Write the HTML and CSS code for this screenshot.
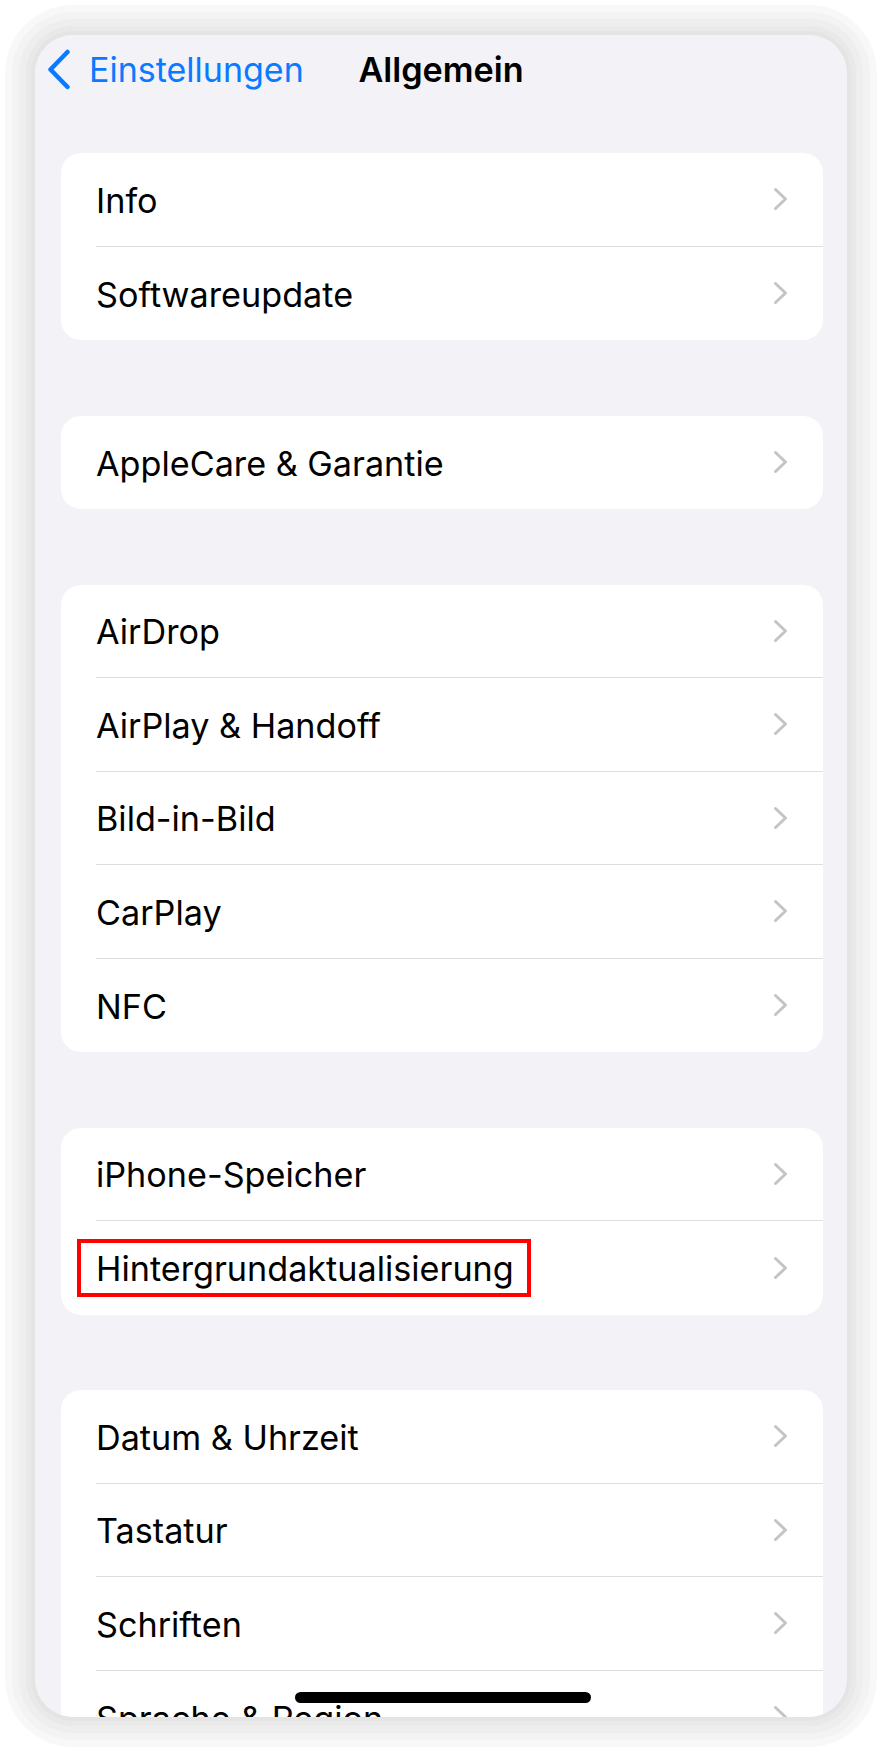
FILE: index.html
```html
<html>
<head>
<title>Allgemein</title>
<link rel="stylesheet" href="styles.css">
</head>
<body>
<div class="phone">
<div class="screen">

<!-- navigation -->
<header class="nav">
  <a class="back" href="#">
    <svg class="back-icon" width="24" height="41" viewBox="0 0 24 41"><polyline points="20.5,3 3.5,20.5 20.5,38" /></svg>
    <span>Einstellungen</span>
  </a>
  <h1 class="title">Allgemein</h1>
  <div></div>
</header>

<main class="groups">
  <ul class="group">
    <li class="row"><div class="row-body"><span class="label">Info</span><svg class="chev" width="15" height="24" viewBox="0 0 15 24"><polyline points="2.5,2.5 12.5,12 2.5,21.5" /></svg></div></li>
    <li class="row"><div class="row-body"><span class="label">Softwareupdate</span><svg class="chev" width="15" height="24" viewBox="0 0 15 24"><polyline points="2.5,2.5 12.5,12 2.5,21.5" /></svg></div></li>
  </ul>

  <ul class="group">
    <li class="row"><div class="row-body"><span class="label">AppleCare &amp; Garantie</span><svg class="chev" width="15" height="24" viewBox="0 0 15 24"><polyline points="2.5,2.5 12.5,12 2.5,21.5" /></svg></div></li>
  </ul>

  <ul class="group">
    <li class="row"><div class="row-body"><span class="label">AirDrop</span><svg class="chev" width="15" height="24" viewBox="0 0 15 24"><polyline points="2.5,2.5 12.5,12 2.5,21.5" /></svg></div></li>
    <li class="row"><div class="row-body"><span class="label">AirPlay &amp; Handoff</span><svg class="chev" width="15" height="24" viewBox="0 0 15 24"><polyline points="2.5,2.5 12.5,12 2.5,21.5" /></svg></div></li>
    <li class="row"><div class="row-body"><span class="label">Bild-in-Bild</span><svg class="chev" width="15" height="24" viewBox="0 0 15 24"><polyline points="2.5,2.5 12.5,12 2.5,21.5" /></svg></div></li>
    <li class="row"><div class="row-body"><span class="label">CarPlay</span><svg class="chev" width="15" height="24" viewBox="0 0 15 24"><polyline points="2.5,2.5 12.5,12 2.5,21.5" /></svg></div></li>
    <li class="row"><div class="row-body"><span class="label">NFC</span><svg class="chev" width="15" height="24" viewBox="0 0 15 24"><polyline points="2.5,2.5 12.5,12 2.5,21.5" /></svg></div></li>
  </ul>

  <ul class="group">
    <li class="row"><div class="row-body"><span class="label">iPhone-Speicher</span><svg class="chev" width="15" height="24" viewBox="0 0 15 24"><polyline points="2.5,2.5 12.5,12 2.5,21.5" /></svg></div></li>
    <li class="row"><div class="row-body"><span class="label marked">Hintergrundaktualisierung</span><svg class="chev" width="15" height="24" viewBox="0 0 15 24"><polyline points="2.5,2.5 12.5,12 2.5,21.5" /></svg></div></li>
  </ul>

  <ul class="group">
    <li class="row"><div class="row-body"><span class="label">Datum &amp; Uhrzeit</span><svg class="chev" width="15" height="24" viewBox="0 0 15 24"><polyline points="2.5,2.5 12.5,12 2.5,21.5" /></svg></div></li>
    <li class="row"><div class="row-body"><span class="label">Tastatur</span><svg class="chev" width="15" height="24" viewBox="0 0 15 24"><polyline points="2.5,2.5 12.5,12 2.5,21.5" /></svg></div></li>
    <li class="row"><div class="row-body"><span class="label">Schriften</span><svg class="chev" width="15" height="24" viewBox="0 0 15 24"><polyline points="2.5,2.5 12.5,12 2.5,21.5" /></svg></div></li>
    <li class="row"><div class="row-body"><span class="label">Sprache &amp; Region</span><svg class="chev" width="15" height="24" viewBox="0 0 15 24"><polyline points="2.5,2.5 12.5,12 2.5,21.5" /></svg></div></li>
  </ul>
</main>

<div class="home-bar"></div>
</div>
</div>
</body>
</html>
```

FILE: styles.css
```css
body {
  margin: 0;
  background-color: #ffffff;
  font-family: Inter, "Noto Sans", "Liberation Sans", sans-serif;
  overflow: hidden;
}

.phone {
  width: 812px;
  height: 1682px;
  margin: 35px;
  border-radius: 38px;
  box-shadow: 0 0 0 4px #e4e4e4, 0 0 0 9px #e9e9e9, 0 0 0 16px #eeeeee, 0 0 0 23px #f3f3f3, 0 0 0 30px #f8f8f8;
}

.screen {
  position: relative;
  height: 100%;
  background-color: #f2f2f7;
  border-radius: 38px;
  overflow: hidden;
}

/* nav bar */
.nav {
  display: grid;
  grid-template-columns: 1fr auto 1fr;
  align-items: center;
  height: 69px;
  padding: 0 12px;
}
.back {
  display: flex;
  align-items: center;
  gap: 18px;
  color: #0a7aff;
  text-decoration: none;
  font-size: 34px;
  white-space: nowrap;
}
.back-icon polyline {
  fill: none;
  stroke: #0a7aff;
  stroke-width: 4.5;
  stroke-linecap: round;
  stroke-linejoin: round;
}
.title {
  margin: 0;
  font-size: 34.2px;
  font-weight: 600;
  color: #000;
}

/* grouped list */
.groups {
  display: flex;
  flex-direction: column;
  gap: 75.5px;
  padding: 49px 24px 0 26px;
}
.group {
  list-style: none;
  margin: 0;
  padding: 0;
  background-color: #ffffff;
  border-radius: 20px;
  overflow: hidden;
}
.row {
  padding-left: 35px;
}
.row-body {
  display: flex;
  align-items: center;
  justify-content: space-between;
  height: 93.5px;
  box-sizing: border-box;
  padding-right: 35px;
  border-bottom: 1.5px solid #dedee1;
}
.row:last-child .row-body {
  border-bottom: none;
}
.label {
  padding-top: 3px;
  font-size: 34.2px;
  line-height: 40px;
  color: #000;
}
.marked {
  display: inline-block;
  padding: 6px 13px 4px 15px;
  margin: 0 -17px 0 -19px;
  border: 4px solid #ff0000;
}
.chev polyline {
  fill: none;
  stroke: #c4c4c7;
  stroke-width: 3;
  stroke-linecap: round;
  stroke-linejoin: round;
}

.home-bar {
  position: absolute;
  left: 260px;
  bottom: 14px;
  width: 296px;
  height: 11px;
  border-radius: 6px;
  background-color: #000;
}
```
